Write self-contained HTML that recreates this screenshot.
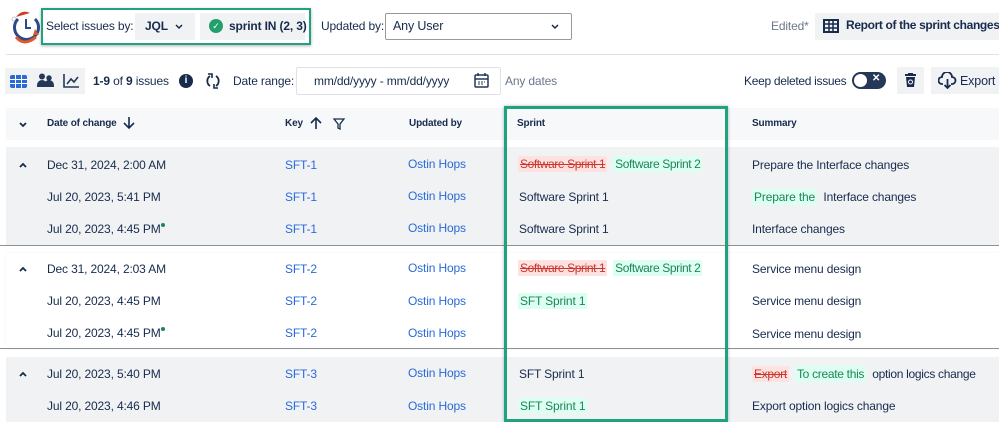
<!DOCTYPE html>
<html><head><style>
*{margin:0;padding:0;box-sizing:border-box}
body{width:999px;height:422px;overflow:hidden;background:#fff;font-family:"Liberation Sans",Arial,sans-serif;font-size:12px;letter-spacing:-0.15px;color:#172b4d;position:relative}
.a{position:absolute;white-space:nowrap}
.lnk{color:#2a6ad8}
.b{font-weight:bold}
.g{background:#f1f2f4}
.del{background:#fde2e1;color:#c9372c;text-decoration:line-through;padding:1px 2px}
.add{background:#dcfff1;color:#1f845a;padding:1px 2px}
.hdr{font-size:10px;font-weight:bold;color:#172b4d}
.dot{position:absolute;width:4px;height:4px;border-radius:50%;background:#1f845a}
</style></head><body>
<svg class="a" style="left:8px;top:7px" width="34" height="40" viewBox="0 0 34 40">
<path d="M8 10 Q14 2 22 6" fill="#d43a2a"/><circle cx="6" cy="12" r="2" fill="#fff" stroke="#ccc"/>
<path d="M10 12 A12 12 0 1 0 27 12" fill="none" stroke="#2b4a8a" stroke-width="3"/>
<path d="M18 12 v9 h5" fill="none" stroke="#2b4a8a" stroke-width="2"/>
<path d="M8 30 Q16 40 28 30" fill="none" stroke="#e2582c" stroke-width="3"/>
<path d="M27 22 l4 6 -6 0z" fill="#e2582c"/>
</svg>
<div class="a" style="left:41px;top:8px;width:270px;height:37px;border:2px solid #1fa27f;box-shadow:0 1px 3px rgba(0,0,0,.3)"></div>
<div class="a" style="left:46px;top:19px;font-size:12px">Select issues by:</div>
<div class="a" style="left:135px;top:13px;width:60px;height:27px;background:#f1f2f4"></div>
<div class="a b" style="left:145px;top:19px;font-size:12px">JQL</div>
<svg class="a" style="left:175px;top:24px" width="8" height="6"><path d="M1 1l3 3 3-3" fill="none" stroke="#172b4d" stroke-width="1.5"/></svg>
<div class="a" style="left:200px;top:13px;width:105px;height:27px;background:#f1f2f4"></div>
<div class="a" style="left:209px;top:19px;width:14px;height:14px;border-radius:50%;background:#22a06b;color:#fff;font-size:9px;text-align:center;line-height:14px">✓</div>
<div class="a b" style="left:229px;top:19px;font-size:12px">sprint IN (2, 3)</div>
<div class="a" style="left:321px;top:19px;font-size:12px">Updated by:</div>
<div class="a" style="left:385px;top:13px;width:187px;height:27px;border:1px solid #999;border-radius:2px"></div>
<div class="a" style="left:393px;top:19px;font-size:12.5px">Any User</div>
<svg class="a" style="left:551px;top:24px" width="8" height="6"><path d="M1 1l3 3 3-3" fill="none" stroke="#172b4d" stroke-width="1.5"/></svg>
<div class="a" style="left:771px;top:19px;color:#6b778c">Edited*</div>
<div class="a" style="left:815px;top:13px;width:184px;height:27px;background:#f1f2f4"></div>
<svg class="a" style="left:823px;top:19px" width="16" height="14"><rect x="1" y="1" width="14" height="12" fill="none" stroke="#172b4d" stroke-width="2"/><path d="M1 5h14M1 9h14M6 1v12M10 1v12" stroke="#172b4d" stroke-width="1.5"/></svg>
<div class="a b" style="left:846px;top:18px;font-size:12px;letter-spacing:-0.35px">Report of the sprint changes</div>
<div class="a" style="left:6px;top:54px;width:993px;height:1px;background:#dfe1e6"></div>
<div class="a" style="left:5px;top:68px;width:80px;height:26px;background:#f1f2f4"></div>
<svg class="a" style="left:10px;top:75px" width="17" height="13"><rect width="17" height="13" rx="2" fill="#2a6ad8"/><path d="M0 4.5h17M0 8.5h17M5.5 0v13M11.5 0v13" stroke="#fff"/></svg>
<svg class="a" style="left:37px;top:73px" width="18" height="15"><circle cx="5" cy="3.5" r="3" fill="#253858"/><path d="M0 12a5 5 0 0 1 10 0v2H0z" fill="#253858"/><circle cx="12" cy="5" r="2.7" fill="#253858"/><path d="M7 14v-2a5 5 0 0 1 10 0v2z" fill="#253858"/></svg>
<svg class="a" style="left:63px;top:73px" width="17" height="15"><path d="M1 1v13h15" fill="none" stroke="#253858" stroke-width="1.6"/><path d="M4 11l4-5 3 3 4-5" fill="none" stroke="#253858" stroke-width="1.6"/></svg>
<div class="a" style="left:93px;top:74px"><b>1-9</b> of <b>9</b> issues</div>
<div class="a" style="left:179px;top:74px;width:14px;height:14px;border-radius:50%;background:#172b4d;color:#fff;font-size:10px;font-weight:bold;text-align:center;line-height:14px">i</div>
<svg class="a" style="left:205px;top:72px" width="16" height="18"><path d="M5 4a6 6 0 0 0 0 10M11 4a6 6 0 0 1 0 10" fill="none" stroke="#172b4d" stroke-width="1.8"/><path d="M3 2h4v4M13 16h-4v-4" fill="none" stroke="#172b4d" stroke-width="1.6"/></svg>
<div class="a" style="left:233px;top:74px">Date range:</div>
<div class="a" style="left:296px;top:67px;width:205px;height:28px;border:1px solid #dfe1e6;border-radius:2px"></div>
<div class="a" style="left:314px;top:74px">mm/dd/yyyy - mm/dd/yyyy</div>
<svg class="a" style="left:474px;top:73px" width="15" height="15"><rect x="1" y="2" width="13" height="12" rx="1" fill="none" stroke="#253858" stroke-width="1.5"/><path d="M1 6h13M4 0v3M11 0v3" stroke="#253858" stroke-width="1.5"/><path d="M4 9h2M7 9h2M10 9h1M4 11h2M7 11h2" stroke="#253858"/></svg>
<div class="a" style="left:505px;top:74px;color:#6b778c">Any dates</div>
<div class="a" style="left:744px;top:74px;letter-spacing:-0.3px">Keep deleted issues</div>
<div class="a" style="left:852px;top:72px;width:34px;height:17px;border-radius:9px;background:#253858"></div>
<div class="a" style="left:854px;top:74px;width:13px;height:13px;border-radius:50%;background:#fff"></div>
<div class="a" style="left:872px;top:73px;color:#fff;font-size:10px;font-weight:bold">✕</div>
<div class="a" style="left:897px;top:67px;width:27px;height:27px;background:#f1f2f4"></div>
<svg class="a" style="left:904px;top:73px" width="13" height="15"><path d="M1 2h11M4 1h5" stroke="#172b4d" stroke-width="2"/><path d="M2 4h9l-1 10H3z" fill="#172b4d"/><circle cx="6.5" cy="9" r="2" fill="none" stroke="#fff"/></svg>
<div class="a" style="left:931px;top:67px;width:68px;height:27px;background:#f1f2f4"></div>
<svg class="a" style="left:938px;top:72px" width="19" height="17"><path d="M5 12H4a3.5 3.5 0 0 1 0-7 5 5 0 0 1 10 0 3.5 3.5 0 0 1 0 7h-1" fill="none" stroke="#172b4d" stroke-width="1.8"/><path d="M9.5 7v9M6.5 13l3 3 3-3" fill="none" stroke="#172b4d" stroke-width="1.8"/></svg>
<div class="a" style="left:960px;top:74px;font-size:12.5px">Export</div>
<div class="a" style="left:6px;top:108px;width:993px;height:32px;background:#f7f8f9"></div>
<svg class="a" style="left:19px;top:122px" width="8" height="6"><path d="M1 1l3 3 3-3" fill="none" stroke="#172b4d" stroke-width="1.8"/></svg>
<div class="a hdr" style="left:47px;top:118px">Date of change</div>
<svg class="a" style="left:123px;top:116px" width="12" height="14"><path d="M6 1v11M1 7l5 5 5-5" fill="none" stroke="#172b4d" stroke-width="1.6"/></svg>
<div class="a hdr" style="left:285px;top:118px">Key</div>
<svg class="a" style="left:310px;top:116px" width="12" height="14"><path d="M6 13V2M1 7l5-5 5 5" fill="none" stroke="#172b4d" stroke-width="1.6"/></svg>
<svg class="a" style="left:333px;top:118px" width="12" height="12"><path d="M1 1h10L7 6v5L5 10V6z" fill="none" stroke="#172b4d" stroke-width="1.3"/></svg>
<div class="a hdr" style="left:409px;top:118px">Updated by</div>
<div class="a hdr" style="left:517px;top:118px">Sprint</div>
<div class="a hdr" style="left:752px;top:118px">Summary</div>
<div class="a g" style="left:6px;top:147px;width:993px;height:98px"></div>
<div class="a" style="left:0;top:245px;width:999px;height:1px;background:#8c9198"></div>
<div class="a" style="left:6px;top:253px;width:993px;height:96px;background:#fff;box-shadow:0 0 2px #eee"></div>
<div class="a" style="left:0;top:348px;width:999px;height:1px;background:#8c9198"></div>
<div class="a g" style="left:6px;top:357px;width:993px;height:65px"></div>

<svg class="a" style="left:19px;top:162px" width="8" height="6"><path d="M1 5l3-3 3 3" fill="none" stroke="#172b4d" stroke-width="1.8"/></svg>
<svg class="a" style="left:19px;top:266px" width="8" height="6"><path d="M1 5l3-3 3 3" fill="none" stroke="#172b4d" stroke-width="1.8"/></svg>
<svg class="a" style="left:19px;top:371px" width="8" height="6"><path d="M1 5l3-3 3 3" fill="none" stroke="#172b4d" stroke-width="1.8"/></svg>

<div class="a" style="left:47px;top:158px">Dec 31, 2024, 2:00 AM</div>
<div class="a" style="left:47px;top:190px">Jul 20, 2023, 5:41 PM</div>
<div class="a" style="left:47px;top:222px">Jul 20, 2023, 4:45 PM</div>
<div class="dot" style="left:161px;top:223px"></div>
<div class="a" style="left:47px;top:262px">Dec 31, 2024, 2:03 AM</div>
<div class="a" style="left:47px;top:294px">Jul 20, 2023, 4:45 PM</div>
<div class="a" style="left:47px;top:326px">Jul 20, 2023, 4:45 PM</div>
<div class="dot" style="left:161px;top:327px"></div>
<div class="a" style="left:47px;top:367px">Jul 20, 2023, 5:40 PM</div>
<div class="a" style="left:47px;top:399px">Jul 20, 2023, 4:46 PM</div>

<div class="a lnk" style="left:285px;top:158px">SFT-1</div>
<div class="a lnk" style="left:285px;top:190px">SFT-1</div>
<div class="a lnk" style="left:285px;top:222px">SFT-1</div>
<div class="a lnk" style="left:285px;top:262px">SFT-2</div>
<div class="a lnk" style="left:285px;top:294px">SFT-2</div>
<div class="a lnk" style="left:285px;top:326px">SFT-2</div>
<div class="a lnk" style="left:285px;top:367px">SFT-3</div>
<div class="a lnk" style="left:285px;top:399px">SFT-3</div>

<div class="a lnk" style="left:408px;top:157px">Ostin Hops</div>
<div class="a lnk" style="left:408px;top:189px">Ostin Hops</div>
<div class="a lnk" style="left:408px;top:221px">Ostin Hops</div>
<div class="a lnk" style="left:408px;top:261px">Ostin Hops</div>
<div class="a lnk" style="left:408px;top:294px">Ostin Hops</div>
<div class="a lnk" style="left:408px;top:326px">Ostin Hops</div>
<div class="a lnk" style="left:408px;top:366px">Ostin Hops</div>
<div class="a lnk" style="left:408px;top:399px">Ostin Hops</div>

<div class="a" style="left:518px;top:157px;letter-spacing:-0.4px"><span class="del">Software Sprint 1</span>&nbsp;&nbsp;<span class="add">Software Sprint 2</span></div>
<div class="a" style="left:519px;top:190px">Software Sprint 1</div>
<div class="a" style="left:519px;top:222px">Software Sprint 1</div>
<div class="a" style="left:518px;top:261px;letter-spacing:-0.4px"><span class="del">Software Sprint 1</span>&nbsp;&nbsp;<span class="add">Software Sprint 2</span></div>
<div class="a" style="left:518px;top:294px"><span class="add">SFT Sprint 1</span></div>
<div class="a" style="left:519px;top:367px">SFT Sprint 1</div>
<div class="a" style="left:518px;top:399px"><span class="add">SFT Sprint 1</span></div>

<div class="a" style="left:752px;top:158px">Prepare the Interface changes</div>
<div class="a" style="left:752px;top:190px"><span class="add">Prepare the</span>&nbsp;&nbsp;Interface changes</div>
<div class="a" style="left:752px;top:222px">Interface changes</div>
<div class="a" style="left:752px;top:262px">Service menu design</div>
<div class="a" style="left:752px;top:294px">Service menu design</div>
<div class="a" style="left:752px;top:327px">Service menu design</div>
<div class="a" style="left:752px;top:367px;letter-spacing:-0.3px"><span class="del">Export</span>&nbsp;&nbsp;<span class="add">To create this</span>&nbsp;&nbsp;option logics change</div>
<div class="a" style="left:752px;top:399px">Export option logics change</div>

<div class="a" style="left:504px;top:106px;width:224px;height:316px;border:3px solid #1fa27f;box-shadow:0 0 3px rgba(0,0,0,.3)"></div>
</body></html>
